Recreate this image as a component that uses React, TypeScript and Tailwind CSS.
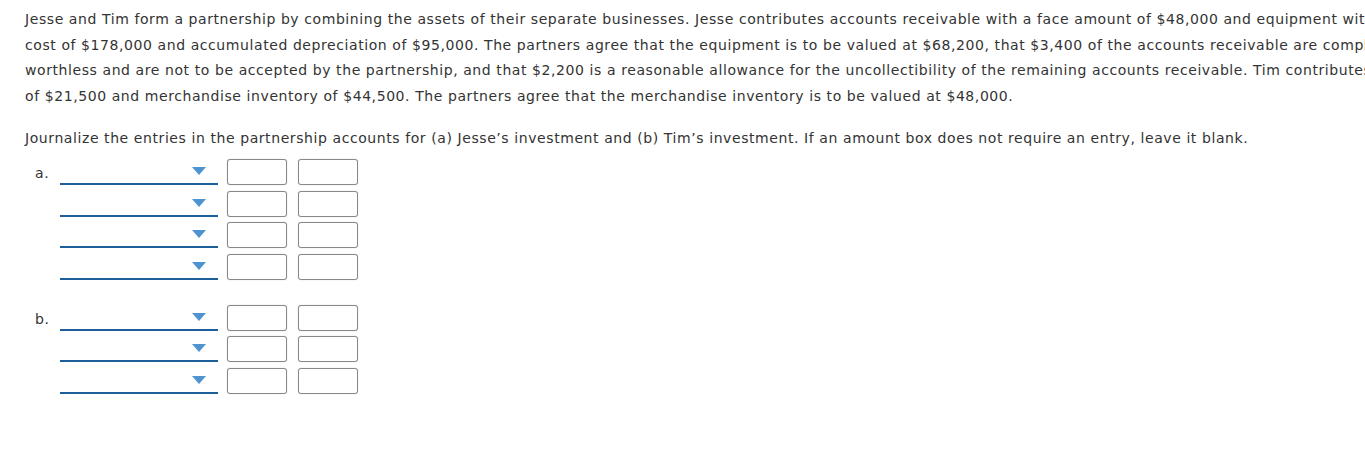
import React from 'react';

const paragraph = [
  'Jesse and Tim form a partnership by combining the assets of their separate businesses. Jesse contributes accounts receivable with a face amount of $48,000 and equipment with a',
  'cost of $178,000 and accumulated depreciation of $95,000. The partners agree that the equipment is to be valued at $68,200, that $3,400 of the accounts receivable are completely',
  'worthless and are not to be accepted by the partnership, and that $2,200 is a reasonable allowance for the uncollectibility of the remaining accounts receivable. Tim contributes cash',
  'of $21,500 and merchandise inventory of $44,500. The partners agree that the merchandise inventory is to be valued at $48,000.',
];

function AccountSelect() {
  return (
    <div className="relative h-[26px] w-[158px] border-b-2 border-[#1d5d99]">
      <span className="absolute right-[12px] top-[8px] h-0 w-0 border-x-[7px] border-t-[8px] border-x-transparent border-t-[#4f93d0]" />
    </div>
  );
}

function AmountBox() {
  return (
    <input
      type="text"
      className="h-[26px] w-[60px] rounded-[3px] border border-[#888888] bg-white shadow-[0_0_1px_rgba(0,0,0,0.3)] outline-none"
    />
  );
}

function EntryGroup({ label, rows }: { label: string; rows: number }) {
  return (
    <div className="flex">
      <div className="w-[35px] pl-[10px] pt-[4px] text-[14px] leading-[20px] tracking-[0.6px]">{label}</div>
      <div className="flex flex-col gap-[5.6px]">
        {Array.from({ length: rows }).map((_, i) => (
          <div key={i} className="flex items-start">
            <AccountSelect />
            <div className="ml-[9px] flex gap-[11px]">
              <AmountBox />
              <AmountBox />
            </div>
          </div>
        ))}
      </div>
    </div>
  );
}

export default function App() {
  return (
    <main
      className="h-[474px] w-[1365px] overflow-hidden bg-white text-[#333333]"
      style={{ fontFamily: 'Verdana, "DejaVu Sans", sans-serif' }}
    >
      <div className="pl-[25px] pt-[7px]">
        <p className="whitespace-nowrap text-[14px] leading-[25.6px] tracking-[0.58px]">
          {paragraph.map((line, i) => (
            <span key={i} className="block">
              {line}
            </span>
          ))}
        </p>
        <p className="mt-[17px] whitespace-nowrap text-[14px] leading-[25.6px] tracking-[0.58px]">
          Journalize the entries in the partnership accounts for (a) Jesse’s investment and (b) Tim’s investment. If an amount box does not require an entry, leave it blank.
        </p>
      </div>
      <div className="mt-[7px] flex flex-col gap-[25px] pl-[25px]">
        <EntryGroup label="a." rows={4} />
        <EntryGroup label="b." rows={3} />
      </div>
    </main>
  );
}
